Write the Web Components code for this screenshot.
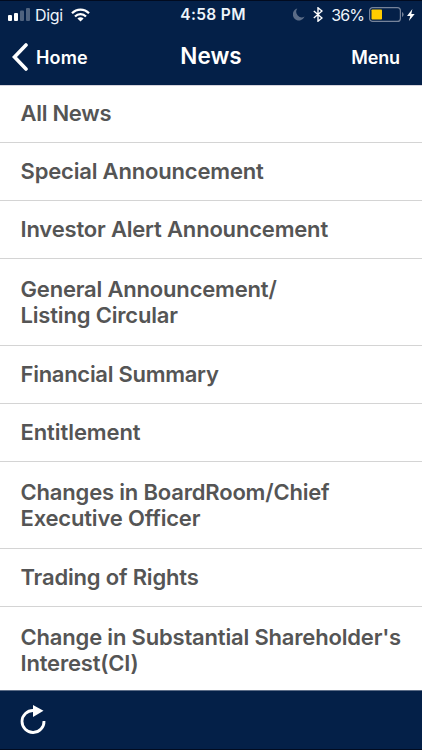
<!DOCTYPE html>
<html lang="en">
<head>
<meta charset="UTF-8">
<meta name="viewport" content="width=device-width, initial-scale=1.0">
<title>News</title>
<style>
    body {
        margin: 0;
        background: white;
        font-family: Inter, "Liberation Sans", sans-serif;
    }
</style>
</head>
<body>
<news-app></news-app>
<script>
class StatusBar extends HTMLElement {
    constructor() {
        super();
        this.attachShadow({ mode: 'open' });
    }

    connectedCallback() {
        this.shadowRoot.innerHTML = `
        <style>
            :host {
                display: grid;
                grid-template-columns: 1fr auto 1fr;
                align-items: center;
                height: 29px;
                padding: 0 7px 0 8px;
                color: #eef4fb;
                font-size: 16px;
                line-height: 20px;
            }
            div {
                display: flex;
                align-items: center;
            }
            svg {
                display: block;
                flex: none;
            }
            .carrier { margin-left: 5px; letter-spacing: -0.3px; }
            .wifi { margin-left: 8px; }
            .time { font-weight: 600; font-size: 15.5px; letter-spacing: 0.35px; padding-left: 3px; }
            .right { justify-content: flex-end; }
            .bluetooth { margin-left: 8px; }
            .percent { margin: 0 5px 0 8px; letter-spacing: -0.9px; }
            .bolt { margin-left: 3px; }
        </style>
        <div>
            <svg width="22" height="13" viewBox="0 0 22 13" fill="#fff">
                <rect x="0" y="7" width="4" height="6" rx="1"/>
                <rect x="6" y="5" width="4" height="8" rx="1"/>
                <rect x="12" y="2.5" width="4" height="10.5" rx="1" opacity=".3"/>
                <rect x="18" y="0" width="4" height="13" rx="1" opacity=".3"/>
            </svg>
            <span class="carrier">Digi</span>
            <svg class="wifi" width="19" height="14" viewBox="0 0 19 14" fill="none" stroke="#fff" stroke-width="2.2">
                <path d="M1 5.3C5.7.3 13.3.3 18 5.3"/>
                <path d="M4 8.6C7 5.4 12 5.4 15 8.6"/>
                <path d="M9.5 13.6 6.4 10.5C8.2 8.9 10.8 8.9 12.6 10.5Z" fill="#fff" stroke="none"/>
            </svg>
        </div>
        <span class="time">4:58 PM</span>
        <div class="right">
            <svg width="12" height="13" viewBox="0 0 12 13">
                <path d="M4.3.5A6.1 6.1 0 1 0 11.6 8.6 5.6 5.6 0 0 1 4.3.5Z" fill="#5b6c87"/>
            </svg>
            <svg class="bluetooth" width="10" height="15" viewBox="0 0 10 15" fill="none" stroke="#fff" stroke-width="1.4">
                <path d="M.8 4 9 11 5 14.2V.8L9 4 .8 11"/>
            </svg>
            <span class="percent">36%</span>
            <svg width="35" height="15" viewBox="0 0 35 15">
                <rect x=".6" y=".6" width="30.8" height="13.8" rx="3" fill="none" stroke="#76839a" stroke-width="1.2"/>
                <rect x="2.5" y="2.5" width="10.5" height="10" rx=".8" fill="#ffcc00"/>
                <path d="M33 5V10Q34.6 9.3 34.6 7.5T33 5Z" fill="#76839a"/>
            </svg>
            <svg class="bolt" width="8" height="12" viewBox="0 0 8 12" fill="#fff">
                <path d="M5.4 0 0 6.9H3.3L1.9 12 7.7 4.9H4.3Z"/>
            </svg>
        </div>
    `;
    }
}
customElements.define('status-bar', StatusBar);

class NavBar extends HTMLElement {
    constructor() {
        super();
        this.attachShadow({ mode: 'open' });
    }

    connectedCallback() {
        this.shadowRoot.innerHTML = `
        <style>
            :host {
                display: grid;
                grid-template-columns: 1fr auto 1fr;
                align-items: center;
                height: 56px;
                padding: 0 22px 0 12px;
                box-sizing: border-box;
                color: white;
                font-size: 18px;
                font-weight: 600;
                line-height: 24px;
            }
            .back {
                display: flex;
                align-items: center;
            }
            .back svg { margin-right: 8px; }
            h1 {
                margin: 0;
                font-size: 22.5px;
                font-weight: 600;
                line-height: 28px;
                padding: 0 0 3px 10px;
            }
            .menu { text-align: right; padding-top: 2px; letter-spacing: -0.15px; }
            .label { padding-top: 2px; letter-spacing: 0.15px; }
        </style>
        <div class="back">
            <svg width="16" height="28" viewBox="0 0 16 28" fill="none" stroke="#fff" stroke-width="3.6" stroke-linecap="round">
                <path d="M14 2 2.5 14 14 26"/>
            </svg>
            <span class="label"><slot name="back"></slot></span>
        </div>
        <h1><slot></slot></h1>
        <div class="menu"><slot name="action"></slot></div>
    `;
    }
}
customElements.define('nav-bar', NavBar);

class NewsRow extends HTMLElement {
    constructor() {
        super();
        this.attachShadow({ mode: 'open' });
    }

    connectedCallback() {
        this.shadowRoot.innerHTML = `
        <style>
            :host {
                display: block;
                height: 58.1px;
                padding: 15px 0 0 20.5px;
                box-sizing: border-box;
                border-bottom: 1px solid #d4d4d4;
                color: #555;
                font-size: 22px;
                font-weight: 590;
                line-height: 26.4px;
                letter-spacing: -0.18px;
                white-space: nowrap;
            }
            :host([tall]) {
                height: 86.8px;
                padding-top: 16.6px;
            }
            :host([tight]) {
                letter-spacing: -0.28px;
            }
            :host([loose]) {
                letter-spacing: -0.08px;
            }
        </style>
        <slot></slot>
    `;
    }
}
customElements.define('news-row', NewsRow);

class ToolBar extends HTMLElement {
    constructor() {
        super();
        this.attachShadow({ mode: 'open' });
    }

    connectedCallback() {
        this.shadowRoot.innerHTML = `
        <style>
            :host {
                display: flex;
                align-items: center;
                flex: none;
                height: 60px;
                padding-left: 20px;
                box-sizing: border-box;
                background: #042048;
                border-top: 1px solid #5d6d87;
                border-bottom: 1px solid #010b20;
            }
        </style>
        <svg width="26" height="30" viewBox="0 0 26 30">
            <path d="M13.5 5.5A11 11 0 1 0 24 16" fill="none" stroke="#fff" stroke-width="2.8"/>
            <path d="M13 0 23.5 5.7 13 12Z" fill="#fff"/>
        </svg>
    `;
    }
}
customElements.define('tool-bar', ToolBar);

class NewsApp extends HTMLElement {
    constructor() {
        super();
        this.attachShadow({ mode: 'open' });
    }

    connectedCallback() {
        this.shadowRoot.innerHTML = `
        <style>
            :host {
                display: flex;
                flex-direction: column;
                height: 750px;
                overflow: hidden;
            }
            header {
                flex: none;
                background: #042048;
                box-shadow: inset 0 1px #010b20, 0 1px #d5d3dc;
            }
            main {
                flex: 1;
                min-height: 0;
                overflow: hidden;
            }
        </style>
        <header>
            <status-bar></status-bar>
            <nav-bar>
                <span slot="back">Home</span>
                News
                <span slot="action">Menu</span>
            </nav-bar>
        </header>
        <main>
            <news-row tight>All News</news-row>
            <news-row>Special Announcement</news-row>
            <news-row>Investor Alert Announcement</news-row>
            <news-row tall>General Announcement/<br>Listing Circular</news-row>
            <news-row tight>Financial Summary</news-row>
            <news-row loose>Entitlement</news-row>
            <news-row tall>Changes in BoardRoom/Chief<br>Executive Officer</news-row>
            <news-row>Trading of Rights</news-row>
            <news-row tall>Change in Substantial Shareholder's<br>Interest(CI)</news-row>
        </main>
        <tool-bar></tool-bar>
    `;
    }
}
customElements.define('news-app', NewsApp);
</script>
</body>
</html>
